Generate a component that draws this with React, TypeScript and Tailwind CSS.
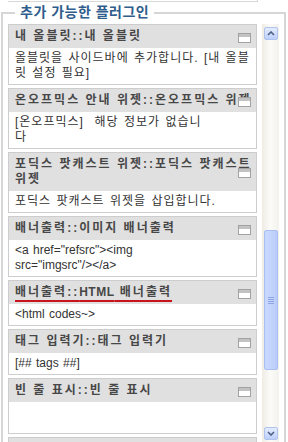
const plugins = [
  {
    title: "내 올블릿::내 올블릿",
    lines: ["올블릿을 사이드바에 추가합니다. [내 올블릿 설정 필요]"],
  },
  {
    title: "온오프믹스 안내 위젯::온오프믹스 위젯",
    lines: ["[온오프믹스]\u00a0 해당 정보가 없습니", "다"],
  },
  {
    title: "포딕스 팟캐스트 위젯::포딕스 팟캐스트 위젯",
    lines: ["포딕스 팟캐스트 위젯을 삽입합니다."],
  },
  {
    title: "배너출력::이미지 배너출력",
    lines: ['<a href="refsrc"><img', 'src="imgsrc"/></a>'],
  },
  {
    title: "배너출력::HTML 배너출력",
    lines: ["<html codes~>"],
    marked: true,
  },
  {
    title: "태그 입력기::태그 입력기",
    lines: ["[## tags ##]"],
  },
  {
    title: "빈 줄 표시::빈 줄 표시",
    lines: [],
  },
  {
    title: "",
    lines: [],
  },
];

const hangul = /[가-힣]/;

function FoldIcon() {
  return (
    <span className="absolute right-[5px] top-[calc(50%-4px)] block h-[10px] w-[13px] border border-[#a2a2a2] bg-white">
      <span className="block h-[3px] bg-[#c2c2c2]" />
    </span>
  );
}

function Plugin({
  title,
  lines,
  marked,
}: {
  title: string;
  lines: string[];
  marked?: boolean;
}) {
  // latin words in a title get tighter spacing than the hangul around them
  const parts = title.split(/([A-Za-z]+)/);
  return (
    <div className="shrink-0 border border-[#cdcdcd]">
      <div className="relative min-h-[23px] bg-[#e0e0e0] py-[4px] pl-[6px] text-[12px] font-bold leading-[15px] tracking-[2px] text-[#474747]">
        <span
          className={
            marked
              ? "underline decoration-[#c8141c] decoration-2 underline-offset-[4px]"
              : ""
          }
        >
          {parts.map((part, i) =>
            i % 2 === 1 ? (
              <span key={i} className="tracking-[0.5px]">
                {part}
              </span>
            ) : (
              part
            )
          )}
        </span>
        <FoldIcon />
      </div>
      <div
        className={
          "bg-white py-[3px] pl-[6px] pr-[2px] leading-[15px] [word-spacing:1px] " +
          (lines.length === 0 ? "h-[31px]" : "")
        }
      >
        {lines.map((line, i) => (
          <div key={i} className={hangul.test(line) ? "tracking-[1px]" : ""}>
            {line}
          </div>
        ))}
      </div>
    </div>
  );
}

function ArrowButton({ down }: { down?: boolean }) {
  return (
    <div className="flex h-[13px] w-[14px] shrink-0 items-center justify-center rounded-[2px] border border-[#afc3ee] bg-gradient-to-b from-[#e4ecfe] to-[#bccffa]">
      <svg width="8" height="5" viewBox="0 0 8 5">
        <path
          d={down ? "M1 1 L4 4 L7 1" : "M1 4 L4 1 L7 4"}
          fill="none"
          stroke="#4d6185"
          strokeWidth="1.6"
        />
      </svg>
    </div>
  );
}

function Scrollbar() {
  return (
    <div className="flex w-[17px] shrink-0 flex-col items-center bg-gradient-to-r from-[#efece5] via-[#fcfbf8] to-[#f3f1ec] pb-[2px] pt-[3px]">
      <ArrowButton />
      <div className="mt-[190px] flex h-[140px] w-[14px] shrink-0 flex-col items-center justify-center gap-[1px] rounded-[2px] border border-[#a9bff2] bg-gradient-to-r from-[#c9d8fd] via-[#c4d4fc] to-[#b8cbf8]">
        <span className="block h-px w-[6px] bg-[#8ea6e4]" />
        <span className="block h-px w-[6px] bg-[#8ea6e4]" />
        <span className="block h-px w-[6px] bg-[#8ea6e4]" />
        <span className="block h-px w-[6px] bg-[#8ea6e4]" />
      </div>
      <div className="flex-1" />
      <ArrowButton down />
    </div>
  );
}

export default function App() {
  return (
    <div className="h-[442px] w-[288px] overflow-hidden bg-white font-['Liberation_Sans','Noto_Sans_CJK_KR',sans-serif] text-[12px] text-[#333]">
      <div className="ml-[8px] h-[2px] w-[250px] border-b border-r border-[#d8d8d8]" />
      <fieldset className="ml-[1px] w-[285px] border-2 border-[#d6d6d6] pb-2 pl-[5px] pr-[5px] pt-[1px]">
        <legend className="ml-[7px] px-[5px] text-[14px] font-bold leading-[21px] tracking-[0.5px] text-[#2f5d8c]">
          추가 가능한 플러그인
        </legend>
        <div className="flex h-[418px] gap-[5px]">
          <div className="flex w-[249px] flex-col gap-[3px] overflow-hidden">
            {plugins.map((p, i) => (
              <Plugin key={i} title={p.title} lines={p.lines} marked={p.marked} />
            ))}
          </div>
          <Scrollbar />
        </div>
      </fieldset>
    </div>
  );
}
